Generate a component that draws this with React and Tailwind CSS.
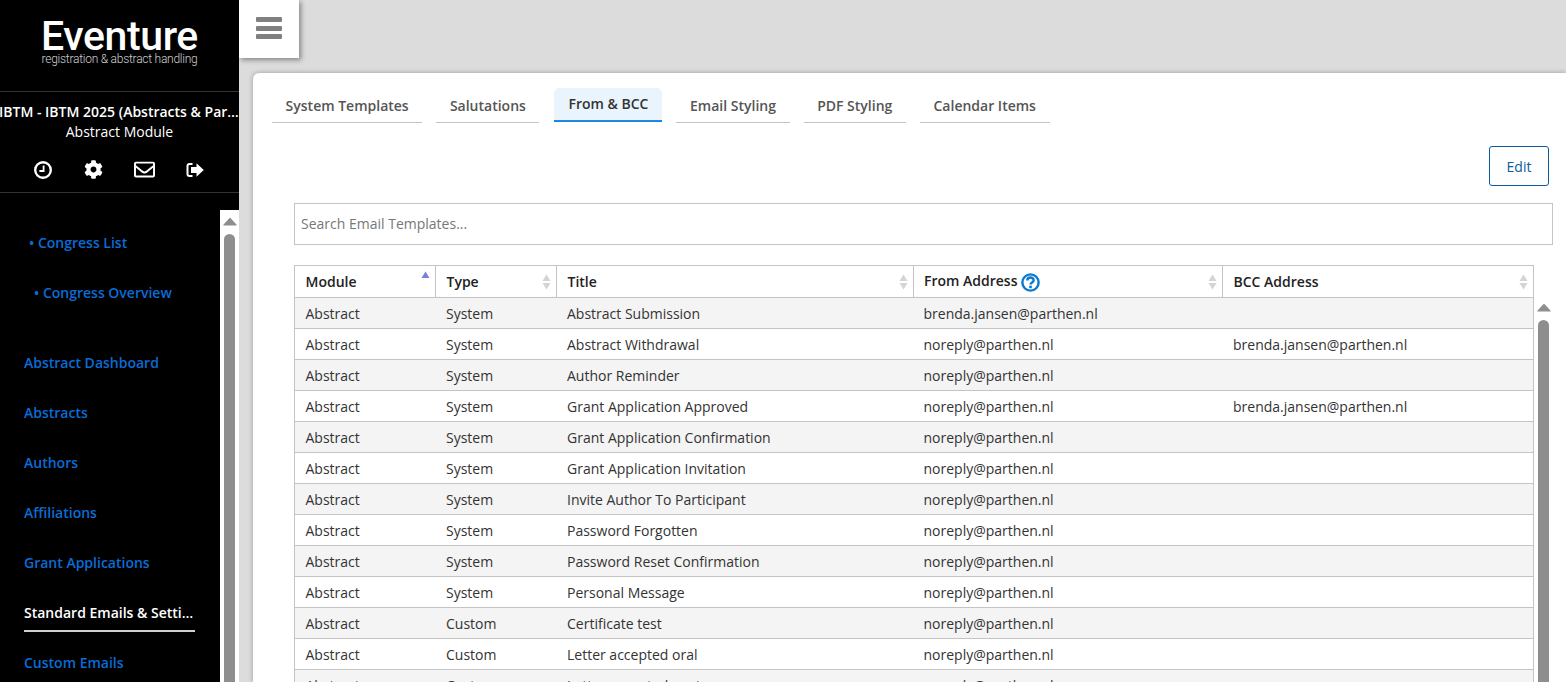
import React from 'react';
import { FaCog, FaRegEnvelope } from 'react-icons/fa';

const TABS = ['System Templates', 'Salutations', 'From & BCC', 'Email Styling', 'PDF Styling', 'Calendar Items'];

const SIDE_LINKS = ['Abstract Dashboard', 'Abstracts', 'Authors', 'Affiliations', 'Grant Applications'];

const ROWS = [
  ['Abstract', 'System', 'Abstract Submission', 'brenda.jansen@parthen.nl', ''],
  ['Abstract', 'System', 'Abstract Withdrawal', 'noreply@parthen.nl', 'brenda.jansen@parthen.nl'],
  ['Abstract', 'System', 'Author Reminder', 'noreply@parthen.nl', ''],
  ['Abstract', 'System', 'Grant Application Approved', 'noreply@parthen.nl', 'brenda.jansen@parthen.nl'],
  ['Abstract', 'System', 'Grant Application Confirmation', 'noreply@parthen.nl', ''],
  ['Abstract', 'System', 'Grant Application Invitation', 'noreply@parthen.nl', ''],
  ['Abstract', 'System', 'Invite Author To Participant', 'noreply@parthen.nl', ''],
  ['Abstract', 'System', 'Password Forgotten', 'noreply@parthen.nl', ''],
  ['Abstract', 'System', 'Password Reset Confirmation', 'noreply@parthen.nl', ''],
  ['Abstract', 'System', 'Personal Message', 'noreply@parthen.nl', ''],
  ['Abstract', 'Custom', 'Certificate test', 'noreply@parthen.nl', ''],
  ['Abstract', 'Custom', 'Letter accepted oral', 'noreply@parthen.nl', ''],
  ['Abstract', 'Custom', 'Letter accepted poster', 'noreply@parthen.nl', ''],
];

const SortArrows = ({ active = false }) => (
  <svg width="9" height="16" viewBox="0 0 9 16" className="shrink-0">
    <path d="M4.5 0.5 L8.5 7 H0.5 Z" fill={active ? '#7b7fdc' : '#d4d4d4'} />
    {!active && <path d="M4.5 15.5 L8.5 9 H0.5 Z" fill="#d4d4d4" />}
  </svg>
);

const Scrollbar = ({ top }) => (
  <div className="flex flex-col items-center">
    <svg width="14" height="9" viewBox="0 0 14 9" className={`${top} shrink-0`}>
      <path d="M7 1.5 L13 8 H1 Z" fill="#8e8e8e" strokeLinejoin="round" stroke="#8e8e8e" strokeWidth="1.2" />
    </svg>
    <div className="mt-[8px] w-[11px] flex-1 rounded-t-[6px] bg-[#8e8e8e]" />
  </div>
);

const ClockIcon = () => (
  <svg width="18" height="18" viewBox="0 0 18 18" fill="none" stroke="#fff">
    <circle cx="9" cy="9" r="7.8" strokeWidth="2.4" />
    <path d="M9.6 4.4 V10 H5.4" strokeWidth="1.8" />
  </svg>
);

const SignOutIcon = () => (
  <svg width="18" height="16" viewBox="0 0 18 16">
    <path d="M6.5 2 H3.5 Q1.5 2 1.5 4 V12 Q1.5 14 3.5 14 H6.5" fill="none" stroke="#fff" strokeWidth="2" />
    <path d="M10.5 1.2 L17.8 8 L10.5 14.8 V11 H5 V5 H10.5 Z" fill="#fff" />
  </svg>
);

const HelpIcon = () => (
  <svg width="19" height="19" viewBox="0 0 18 18" fill="none" stroke="#0a7ad1">
    <circle cx="9" cy="9" r="7.7" strokeWidth="2.3" />
    <path d="M6 7 C6 3.4 12 3.4 12 6.8 C12 9 9 8.8 9 11" strokeWidth="2.3" />
    <path d="M9 12 V14.4" strokeWidth="2.5" />
  </svg>
);

const Sidebar = () => (
  <aside className="flex h-full w-[239px] shrink-0 flex-col overflow-hidden bg-black text-white">
    <div className="flex h-[92px] shrink-0 flex-col items-center border-b border-[#333] pt-[14px]">
      <div className="font-['Roboto'] text-[41px] leading-[44px] font-medium tracking-[-0.4px]">Eventure</div>
      <div className="mt-[-6px] font-['Roboto'] text-[12px] leading-[14px] font-light tracking-[-0.25px] text-[#d0d0d0]">
        registration &amp; abstract handling
      </div>
    </div>
    <div className="flex h-[101px] shrink-0 flex-col border-b border-[#333] pt-[10px] text-center">
      <div className="-ml-[1px] w-[241px] truncate text-[14px] leading-[20px] font-semibold whitespace-nowrap">IBTM - IBTM 2025 (Abstracts &amp; Participants)</div>
      <div className="text-[14px] leading-[20px]">Abstract Module</div>
      <div className="mt-[17px] flex items-center justify-center gap-[31px] pr-[1px]">
        <span className="mr-[1px] flex"><ClockIcon /></span>
        <FaCog size={19} />
        <FaRegEnvelope size={21} />
        <SignOutIcon />
      </div>
    </div>
    <div className="flex min-h-0 flex-1">
      <nav className="w-[220px] shrink-0 pt-[40px] text-[14px] leading-[20px] font-semibold text-[#0a6cd6]">
        <div className="pl-[29px]">• Congress List</div>
        <div className="mt-[30px] pl-[34px]">• Congress Overview</div>
        <div className="mt-[50px] flex flex-col gap-[30px] pl-[24px]">
          {SIDE_LINKS.map((link) => (
            <div key={link}>{link}</div>
          ))}
          <div className="w-[171px] border-b-2 border-[#d0d0d0] pb-[7px] text-white">
            <div className="truncate">Standard Emails &amp; Settings</div>
          </div>
        </div>
        <div className="mt-[21px] pl-[24px]">Custom Emails</div>
      </nav>
      <div className="mt-[17px] flex w-[19px] justify-center bg-white">
        <Scrollbar top="mt-[7px]" />
      </div>
    </div>
  </aside>
);

const Tabs = () => (
  <div className="flex items-end gap-[14px] pl-[19px]">
    {TABS.map((tab) =>
      tab === 'From & BCC' ? (
        <div
          key={tab}
          className="mb-[1px] ml-[1px] flex h-[34px] w-[108px] items-start justify-center rounded-t-[5px] border-b-2 border-[#1e88e0] bg-[#eaf4fc] pt-[6px] text-[14px] leading-[20px] font-semibold text-[#333]"
        >
          {tab}
        </div>
      ) : (
        <div
          key={tab}
          className="flex h-[35px] items-start border-b border-[#c4c4c4] px-[13.6px] pt-[8px] text-[14px] leading-[20px] font-semibold text-[#555]"
        >
          {tab}
        </div>
      ),
    )}
  </div>
);

const HEADERS = [
  { label: 'Module', width: 'w-[141px]', active: true },
  { label: 'Type', width: 'w-[121px]' },
  { label: 'Title', width: 'w-[357px]' },
  { label: 'From Address', width: 'w-[309px]', help: true },
  { label: 'BCC Address', width: 'w-[311px]' },
];

const TemplatesTable = () => (
  <div className="flex min-h-0 flex-1">
    <div className="w-[1240px] shrink-0">
      <table className="w-full table-fixed border-collapse text-[14px] text-[#333]">
        <thead>
          <tr className="h-[32px] border border-[#c4c4c4]">
            {HEADERS.map((h) => (
              <th key={h.label} className={`${h.width} border-r border-[#c4c4c4] pt-[1px] pr-[5px] text-left font-semibold text-[#222] ${h.help ? 'pl-[10px]' : 'pl-[10.5px]'}`}>
                <div className="flex items-center">
                  <span className={`leading-[20px] ${h.help ? 'mb-[2px]' : ''}`}>{h.label}</span>
                  {h.help && <span className="ml-[3.5px] flex"><HelpIcon /></span>}
                  <span className={`ml-auto flex ${h.active ? 'mb-[6px]' : ''}`}><SortArrows active={h.active} /></span>
                </div>
              </th>
            ))}
          </tr>
        </thead>
        <tbody>
          {ROWS.map((row, i) => (
            <tr key={row[2]} className={`h-[31px] border border-[#c4c4c4] ${i % 2 === 0 ? 'bg-[#f4f4f4]' : 'bg-white'}`}>
              {row.map((cell, j) => (
                <td key={j} className={`truncate pt-[2px] leading-[20px] ${j === 3 ? 'pl-[10px]' : 'pl-[10.5px]'}`}>{cell}</td>
              ))}
            </tr>
          ))}
        </tbody>
      </table>
    </div>
    <div className="mt-[32px] ml-[2px] flex w-[15px] justify-center">
      <Scrollbar top="mt-[6px]" />
    </div>
  </div>
);

export default function App() {
  return (
    <div className="flex h-screen overflow-hidden bg-[#dcdcdc] font-['Open_Sans',sans-serif]">
      <Sidebar />
      <div className="flex min-w-0 flex-1 flex-col">
        <div className="h-[73px] shrink-0">
          <button className="flex h-[58px] w-[60px] items-center justify-center bg-white pb-[2px] shadow-[2px_2px_5px_rgba(0,0,0,0.4)]">
            <span className="flex w-[26px] flex-col gap-[3.5px]">
              <span className="h-[5px] rounded-[1px] bg-[#808080]" />
              <span className="h-[5px] rounded-[1px] bg-[#808080]" />
              <span className="h-[5px] rounded-[1px] bg-[#808080]" />
            </span>
          </button>
        </div>
        <main className="ml-[14px] flex min-h-0 flex-1 flex-col overflow-hidden rounded-tl-[6px] bg-white pt-[15px] shadow-[0_0_5px_rgba(0,0,0,0.3)]">
          <Tabs />
          <div className="flex justify-end pt-[23px] pr-[17px]">
            <button className="h-[40px] w-[60px] rounded-[3px] border border-[#0b5a9e] text-[14px] text-[#0b5a9e]">Edit</button>
          </div>
          <div className="flex min-h-0 flex-1 flex-col pt-[17px] pl-[41px]">
            <input
              placeholder="Search Email Templates..."
              className="h-[42px] w-[1259px] shrink-0 border border-[#c4c4c4] px-[6px] pb-[2px] text-[14px] outline-none placeholder:text-[#777]"
            />
            <div className="mt-[20px] flex min-h-0 flex-1">
              <TemplatesTable />
            </div>
          </div>
        </main>
      </div>
    </div>
  );
}
